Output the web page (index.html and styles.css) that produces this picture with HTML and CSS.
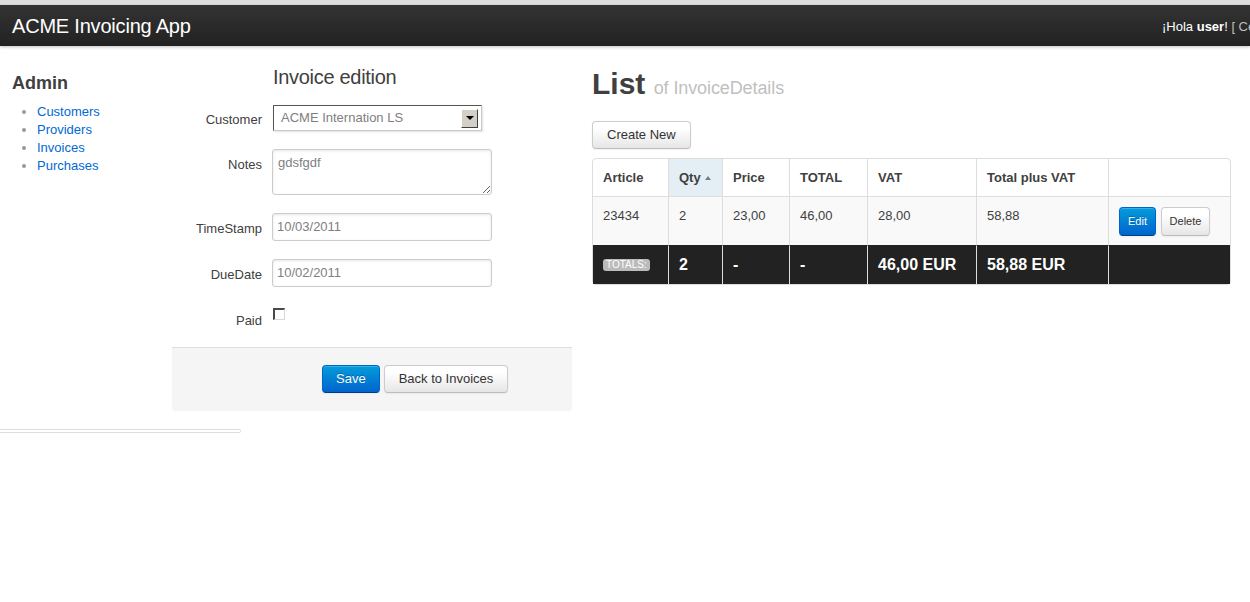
FILE: index.html
```html
<!DOCTYPE html>
<html lang="es">
<head>
<meta charset="utf-8">
<title>ACME Invoicing App</title>
<link rel="stylesheet" href="styles.css">
</head>
<body>
<div class="chrome-strip"></div>
<header class="topbar">
  <a class="brand" href="#">ACME Invoicing App</a>
  <p class="greeting">¡Hola <strong>user</strong>! <span class="logout">[ Cerrar sesión ]</span></p>
</header>

<div class="page">
  <aside class="sidebar">
    <h3>Admin</h3>
    <ul class="nav-list">
      <li><a href="#">Customers</a></li>
      <li><a href="#">Providers</a></li>
      <li><a href="#">Invoices</a></li>
      <li><a href="#">Purchases</a></li>
    </ul>
  </aside>

  <section class="edit">
    <form class="form">
      <div class="legend">Invoice edition</div>

      <div class="field">
        <label class="field-label field-label-select">Customer</label>
        <div class="select">
          <span class="select-value">ACME Internation LS</span>
          <span class="select-arrow"><span class="select-tri"></span></span>
        </div>
      </div>

      <div class="field">
        <label class="field-label">Notes</label>
        <textarea class="text-input textarea">gdsfgdf</textarea>
      </div>

      <div class="field">
        <label class="field-label">TimeStamp</label>
        <input class="text-input" type="text" value="10/03/2011">
      </div>

      <div class="field">
        <label class="field-label">DueDate</label>
        <input class="text-input" type="text" value="10/02/2011">
      </div>

      <div class="field field-last">
        <label class="field-label">Paid</label>
        <span class="checkbox"></span>
      </div>

      <div class="actions">
        <button class="btn btn-primary btn-save" type="button">Save</button>
        <button class="btn" type="button">Back to Invoices</button>
      </div>
    </form>
  </section>

  <section class="list">
    <h1 class="page-title">List <small>of InvoiceDetails</small></h1>
    <div class="toolbar">
      <button class="btn" type="button">Create New</button>
    </div>
    <table class="grid">
      <thead>
        <tr>
          <th class="c-article">Article</th>
          <th class="c-qty sorted">Qty</th>
          <th class="c-price">Price</th>
          <th class="c-total">TOTAL</th>
          <th class="c-vat">VAT</th>
          <th class="c-tpv">Total plus VAT</th>
          <th class="c-act"></th>
        </tr>
      </thead>
      <tbody>
        <tr>
          <td>23434</td>
          <td>2</td>
          <td>23,00</td>
          <td>46,00</td>
          <td>28,00</td>
          <td>58,88</td>
          <td class="row-actions">
            <button class="btn btn-primary btn-small" type="button">Edit</button>
            <button class="btn btn-small" type="button">Delete</button>
          </td>
        </tr>
      </tbody>
      <tfoot>
        <tr>
          <td><span class="label">Totals:</span></td>
          <td>2</td>
          <td>-</td>
          <td>-</td>
          <td>46,00 EUR</td>
          <td>58,88 EUR</td>
          <td></td>
        </tr>
      </tfoot>
    </table>
  </section>
</div>
<div class="rule"></div>
</body>
</html>
```

FILE: styles.css
```css
body {
  margin: 0;
  font-family: "Liberation Sans", Arial, sans-serif;
  font-size: 13px;
  line-height: 18px;
  color: #404040;
  background: #fff;
}

a {
  color: #0069d6;
  text-decoration: none;
}

.chrome-strip {
  height: 5px;
  background: #dedede;
}

.topbar {
  display: flex;
  align-items: center;
  height: 41px;
  background: linear-gradient(#333333, #222222);
  box-shadow: 0 1px 3px rgba(0, 0, 0, 0.25);
  overflow: hidden;
}

.brand {
  flex: 1;
  padding-left: 12px;
  font-size: 20px;
  line-height: 20px;
  letter-spacing: -0.2px;
  color: #fff;
}

.greeting {
  flex: 0 0 88px;
  margin: 2px 0 0;
  white-space: nowrap;
  overflow: hidden;
  color: #fff;
}

.logout {
  color: #bfbfbf;
}

.page {
  display: flex;
  align-items: flex-start;
  padding-left: 12px;
}

/* sidebar */
.sidebar {
  flex: 0 0 160px;
  padding-top: 24px;
}

.sidebar h3 {
  margin: 0 0 6px;
  font-size: 18px;
  line-height: 27px;
  color: #404040;
}

.nav-list {
  margin: 0;
  padding-left: 25px;
  list-style: disc;
}

.nav-list li::marker {
  color: #999;
}

/* form */
.edit {
  flex: 0 0 400px;
  padding-top: 21px;
}

.form {
  margin: 0;
}

.legend {
  padding-left: 101px;
  margin-bottom: 18px;
  font-size: 20px;
  line-height: 20px;
  letter-spacing: -0.3px;
  color: #404040;
}

.field {
  display: flex;
  align-items: flex-start;
  margin-bottom: 18px;
}

.field-last {
  margin-bottom: 17px;
}

.field-label {
  flex: 0 0 90px;
  margin-right: 10px;
  padding-top: 7px;
  text-align: right;
  color: #404040;
}

.field-label-select {
  padding-top: 6px;
}

.text-input {
  width: 210px;
  height: 18px;
  margin: 0;
  padding: 4px;
  border: 1px solid #ccc;
  border-radius: 3px;
  font-family: inherit;
  font-size: 13px;
  line-height: 18px;
  color: #808080;
  box-shadow: inset 0 1px 3px rgba(0, 0, 0, 0.1);
  outline: none;
}

.textarea {
  height: 36px;
  padding: 4px 4px 4px 5px;
  width: 209px;
}

.select {
  box-sizing: border-box;
  display: flex;
  align-items: center;
  justify-content: space-between;
  width: 209px;
  height: 26px;
  margin-left: 1px;
  padding: 0 3px 0 7px;
  border: 1px solid;
  border-color: #555 #c8c8c8 #c8c8c8 #555;
  color: #808080;
  box-shadow: 1px 1px 2px rgba(0, 0, 0, 0.12);
}

.select-arrow {
  box-sizing: border-box;
  display: flex;
  align-items: center;
  justify-content: center;
  width: 17px;
  height: 19px;
  background: #d4d0c8;
  border: 1px solid;
  border-color: #fff #404040 #404040 #fff;
}

.select-tri {
  width: 0;
  height: 0;
  border-left: 4px solid transparent;
  border-right: 4px solid transparent;
  border-top: 4px solid #000;
}

.checkbox {
  box-sizing: border-box;
  width: 12px;
  height: 12px;
  margin: 3px 0 0 1px;
  background: #fff;
  border-top: 2px solid #4a4a4a;
  border-left: 2px solid #4a4a4a;
  border-right: 1px solid #d8d8d8;
  border-bottom: 1px solid #d8d8d8;
}

.actions {
  display: flex;
  gap: 4px;
  margin: 0 0 18px;
  padding: 17px 20px 18px 150px;
  background: #f5f5f5;
  border-top: 1px solid #ddd;
  border-radius: 0 0 3px 3px;
}

/* buttons */
.btn {
  display: inline-block;
  margin: 0;
  padding: 5px 14px 6px;
  font-family: inherit;
  font-size: 13px;
  line-height: 15px;
  color: #333;
  background: linear-gradient(#ffffff, #ffffff 25%, #e6e6e6);
  border: 1px solid #ccc;
  border-bottom-color: #bbb;
  border-radius: 4px;
  box-shadow: inset 0 1px 0 rgba(255, 255, 255, 0.2), 0 1px 2px rgba(0, 0, 0, 0.05);
}

.btn-primary {
  color: #fff;
  background: linear-gradient(#049cdb, #0064cd);
  border-color: #0064cd #0064cd #003f81;
  text-shadow: 0 -1px 0 rgba(0, 0, 0, 0.25);
}

.btn-save {
  padding-left: 13px;
  padding-right: 13px;
}

.btn-small {
  padding: 7px 8px;
  font-size: 11px;
  line-height: 13px;
}

/* list */
.list {
  flex: 0 0 639px;
  margin-left: 20px;
  padding-top: 20px;
}

.page-title {
  margin: 0 0 19px;
  font-size: 30px;
  line-height: 36px;
  font-weight: bold;
  color: #404040;
}

.page-title small {
  font-size: 18px;
  line-height: 18px;
  font-weight: normal;
  letter-spacing: -0.1px;
  color: #bfbfbf;
}

.toolbar {
  display: flex;
  margin-bottom: 9px;
}

.grid {
  width: 639px;
  table-layout: fixed;
  border: 1px solid #ddd;
  border-collapse: separate;
  border-spacing: 0;
  border-radius: 4px;
}

.grid th,
.grid td {
  box-sizing: border-box;
  padding: 10px 10px 9px;
  line-height: 18px;
  text-align: left;
  vertical-align: top;
  white-space: nowrap;
}

.grid th {
  font-weight: bold;
}

.grid th + th,
.grid td + td {
  border-left: 1px solid #ddd;
}

.grid td {
  border-top: 1px solid #ddd;
}

.c-article { width: 75px; }
.c-qty { width: 54px; }
.c-price { width: 67px; }
.c-total { width: 78px; }
.c-vat { width: 109px; }
.c-tpv { width: 132px; }
.c-act { width: 122px; }

.sorted {
  background: #e3eef5;
}

.sorted::after {
  content: "";
  display: inline-block;
  margin: 0 0 2px 4px;
  vertical-align: middle;
  border-left: 3px solid transparent;
  border-right: 3px solid transparent;
  border-bottom: 4px solid #555;
  opacity: 0.75;
}

.grid tbody td {
  background: #f9f9f9;
}

.row-actions .btn + .btn {
  margin-left: 1px;
}

.grid tfoot td {
  padding-bottom: 10px;
  background: #222;
  color: #fff;
  font-size: 16px;
  font-weight: bold;
  border-top-color: #222;
}

.label {
  display: inline-block;
  padding: 0 3px;
  font-size: 10px;
  line-height: 12px;
  font-weight: normal;
  text-transform: uppercase;
  color: #fff;
  background: #bbb;
  border-radius: 3px;
  vertical-align: 2px;
}

.rule {
  width: 240px;
  height: 2px;
  border: 1px solid #ddd;
  border-left: none;
  border-radius: 0 3px 3px 0;
}
```
